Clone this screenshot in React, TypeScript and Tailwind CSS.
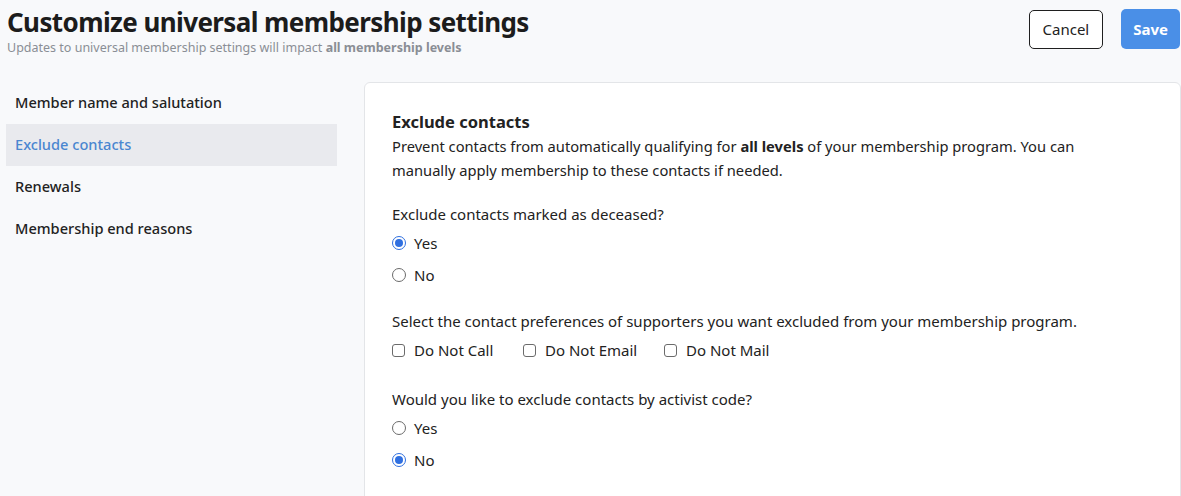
import React from "react";

const font = { fontFamily: '"Noto Sans", "Open Sans", sans-serif' };

function Radio({ checked, label }: { checked: boolean; label: string }) {
  return (
    <div className="flex items-center h-[32px]">
      <span
        className={
          "w-[14px] h-[14px] rounded-full flex items-center justify-center " +
          (checked ? "border border-[#2f6fe0] bg-white" : "border border-[#6b6b6b] bg-white")
        }
      >
        {checked && <span className="w-[8px] h-[8px] rounded-full bg-[#2f6fe0]" />}
      </span>
      <span className="ml-[8px] text-[15px] text-[#222]">{label}</span>
    </div>
  );
}

function Check({ label }: { label: string }) {
  return (
    <div className="flex items-center">
      <span className="w-[13px] h-[13px] rounded-[3px] border border-[#6b6b6b] bg-white" />
      <span className="ml-[9px] text-[15px] text-[#222]">{label}</span>
    </div>
  );
}

export default function App() {
  const nav = ["Member name and salutation", "Exclude contacts", "Renewals", "Membership end reasons"];
  return (
    <div className="w-[1181px] h-[496px] overflow-hidden bg-[#f8f9fb] text-[#1f1f1f]" style={font}>
      <div className="flex items-start justify-between pl-[7px] pr-[1px] pt-[4px]">
        <div>
          <h1 className="text-[26px] font-bold leading-[36px] tracking-[-0.6px] text-[#1c1c1c]">
            Customize universal membership settings
          </h1>
          <p className="text-[12.5px] leading-[16px] text-[#8a8e95]">
            Updates to universal membership settings will impact{" "}
            <span className="font-bold">all membership levels</span>
          </p>
        </div>
        <div className="flex items-center gap-[18px] pt-[6px]">
          <button className="h-[39px] px-[13px] rounded-[5px] border border-[#1f1f1f] bg-white text-[15px] text-[#222]">
            Cancel
          </button>
          <button className="h-[40px] px-[12px] rounded-[5px] bg-[#4a8fe7] text-[15px] font-bold text-white mt-[-1px]">
            Save
          </button>
        </div>
      </div>

      <div className="flex mt-[26px]">
        <nav className="w-[364px] pl-[6px] pr-[27px]">
          {nav.map((n, i) => (
            <div
              key={n}
              className={
                "h-[42px] flex items-center pl-[9px] text-[14.6px] font-medium " +
                (i === 1 ? "bg-[#e9eaee] text-[#4a86d0]" : "text-[#222]")
              }
            >
              {n}
            </div>
          ))}
        </nav>
        <section className="flex-1 h-[420px] bg-white border border-[#e3e5e8] rounded-tl-[6px] rounded-tr-[6px] pl-[27px] pt-[27px]">
          <h2 className="text-[16.5px] font-bold leading-[24px] text-[#222]">Exclude contacts</h2>
          <p className="text-[14.7px] leading-[24px] text-[#222] whitespace-nowrap">
            Prevent contacts from automatically qualifying for <span className="font-bold">all levels</span> of
            your membership program. You can
            <br />
            manually apply membership to these contacts if needed.
          </p>

          <p className="mt-[20px] text-[15px] leading-[24px] text-[#222]">Exclude contacts marked as deceased?</p>
          <div className="mt-[1px]">
            <Radio checked label="Yes" />
            <Radio checked={false} label="No" />
          </div>

          <p className="mt-[18px] text-[15px] leading-[24px] text-[#222]">
            Select the contact preferences of supporters you want excluded from your membership program.
          </p>
          <div className="flex items-center h-[32px] mt-[1px]">
            <div className="w-[131px]"><Check label="Do Not Call" /></div>
            <div className="w-[141px]"><Check label="Do Not Email" /></div>
            <div><Check label="Do Not Mail" /></div>
          </div>

          <p className="mt-[21px] text-[15px] leading-[24px] text-[#222]">
            Would you like to exclude contacts by activist code?
          </p>
          <div className="mt-[1px]">
            <Radio checked={false} label="Yes" />
            <Radio checked label="No" />
          </div>
        </section>
      </div>
    </div>
  );
}
